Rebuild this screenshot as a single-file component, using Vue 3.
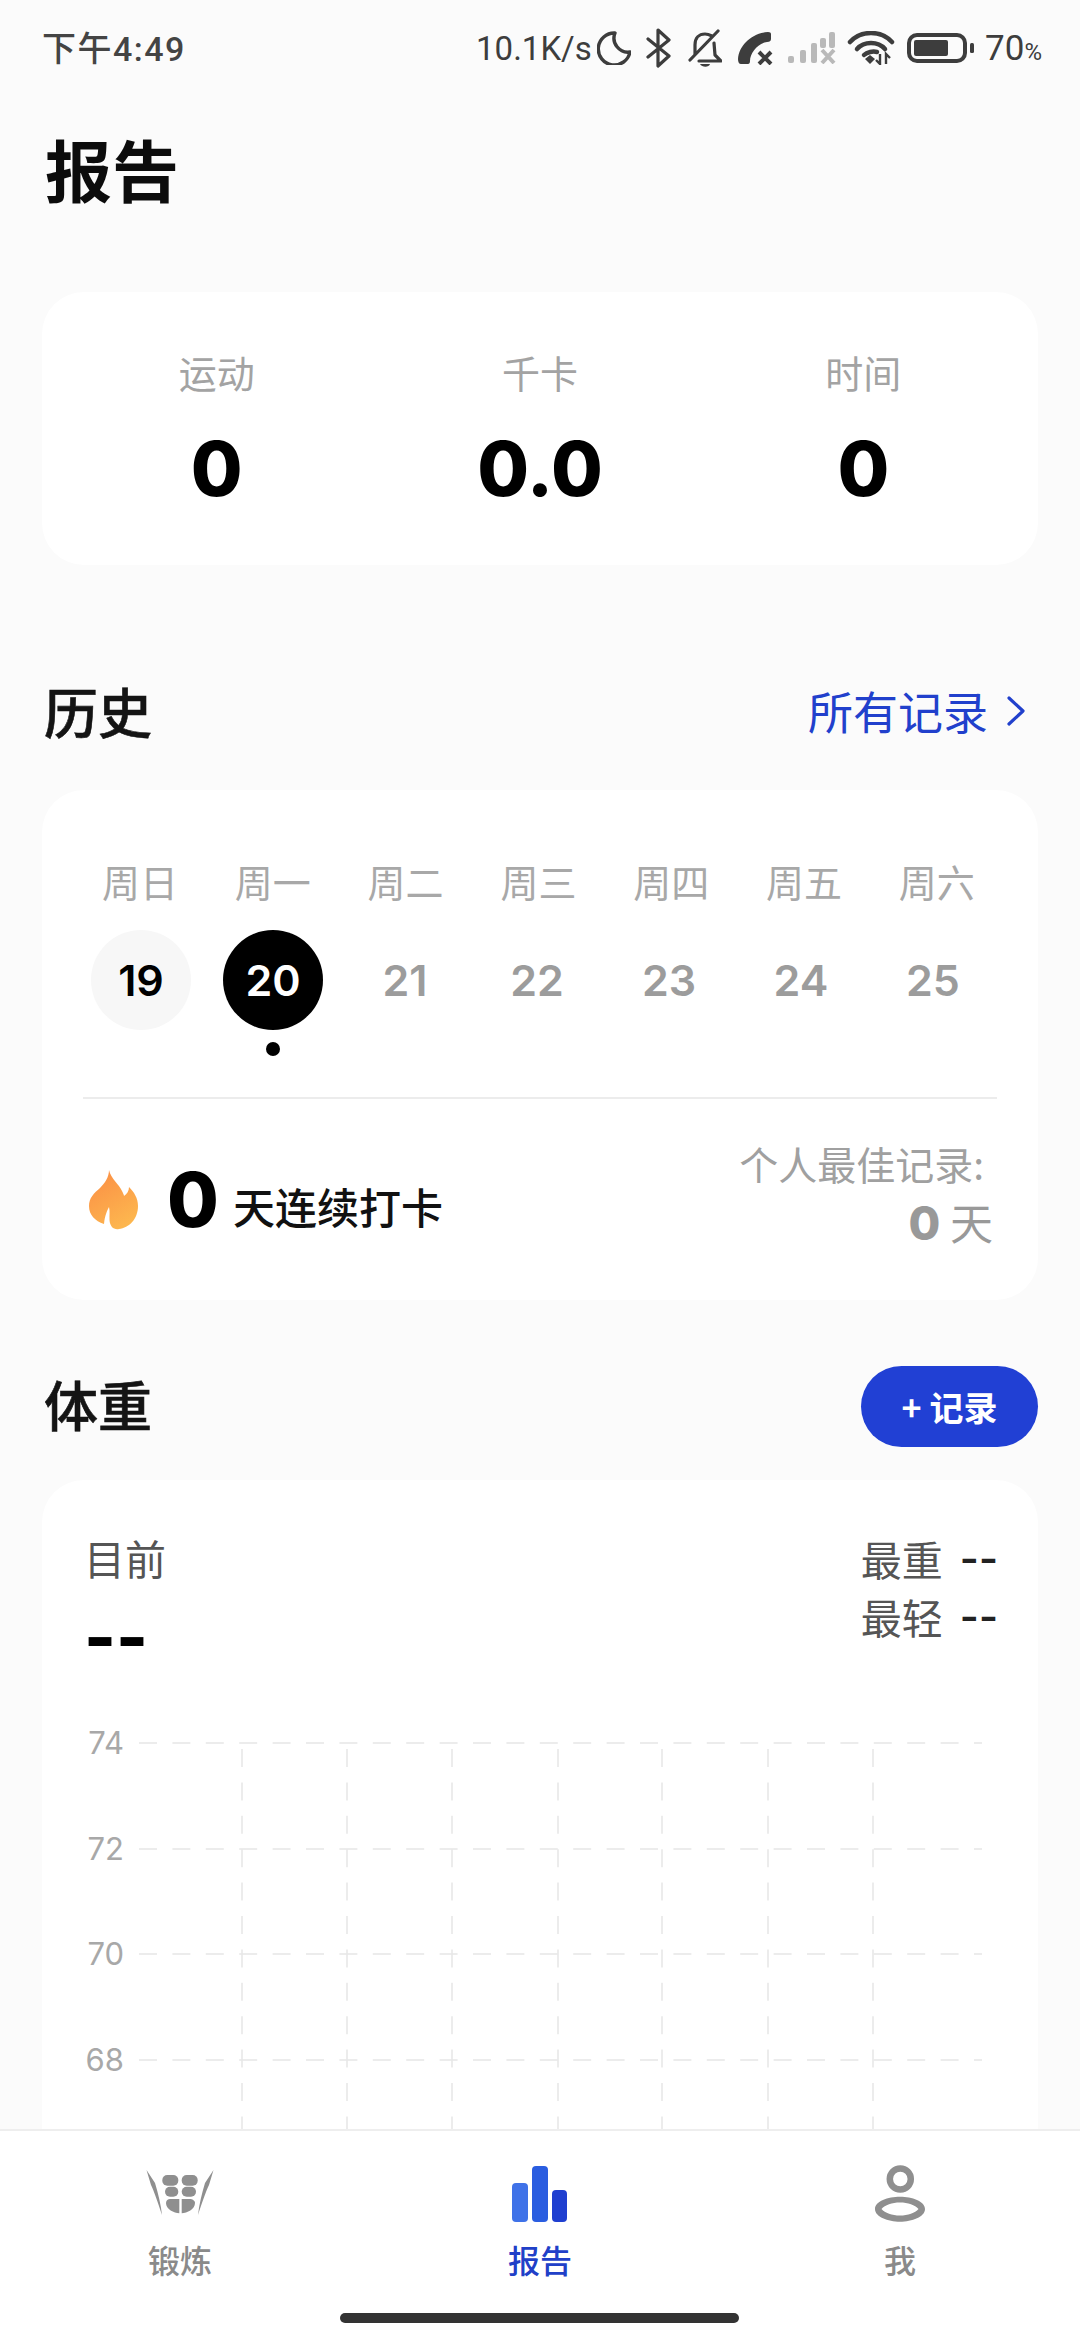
<script setup>
const stats = [
  { label: '运动', value: '0' },
  { label: '千卡', value: '0.0' },
  { label: '时间', value: '0' },
]
const days = [
  { w: '周日', d: 19, cls: 'today-soft' },
  { w: '周一', d: 20, cls: 'selected', dot: true },
  { w: '周二', d: 21 },
  { w: '周三', d: 22 },
  { w: '周四', d: 23 },
  { w: '周五', d: 24 },
  { w: '周六', d: 25 },
]
const ticks = [74, 72, 70, 68]
const hLines = [12, 118, 223, 329]
const vLines = [103, 208, 313, 419, 523, 629, 734]
</script>

<template>
  <div class="screen">
    <header class="status">
      <span class="time">下午4:49</span>
      <div class="status-right">
        <span class="speed">10.1K/s</span>
        <svg class="i-moon" width="34" height="34" viewBox="0 0 34 34"><path d="M18 2A16 16 0 1 0 33 21A14 14 0 0 1 18 2Z" fill="none" stroke="#3d3d3d" stroke-width="3.4" stroke-linejoin="round"/></svg>
        <svg class="i-bt" width="26" height="40" viewBox="0 0 26 40"><path d="M2 11 23 28 12 38V2L23 12 2 29" fill="none" stroke="#3d3d3d" stroke-width="3.2" stroke-linejoin="round" stroke-linecap="round"/></svg>
        <svg class="i-bell" width="34" height="40" viewBox="0 0 34 40"><path d="M7 26V17C7 10 11 6 17 6C19 6 22 7 24 8M26 15 27 27 33 33H11M30 3 2 32" fill="none" stroke="#3d3d3d" stroke-width="3.2" stroke-linejoin="round" stroke-linecap="round"/><path d="M12 36H22C21 39.500 14 39.500 12 36Z" fill="#3d3d3d"/></svg>
        <svg class="i-phone" width="36" height="34" viewBox="0 0 36 34"><path d="M30 1C14 2 1 14 0 28Q0 33 3 33H10Q12 33 12 30C12 22 20 12 29 11Q33 11 33 8V3Q33 1 30 1Z" fill="#3d3d3d"/><path d="M21 21 33 33M33 21 21 33" stroke="#3d3d3d" stroke-width="4"/></svg>
        <svg class="i-signal" width="48" height="32" viewBox="0 0 48 32"><g fill="#b9b9b9"><rect x="0" y="24" width="6" height="7" rx="2"/><rect x="12" y="18" width="6" height="13" rx="2"/><rect x="23" y="11" width="6" height="20" rx="2"/><rect x="32" y="6" width="6" height="10" rx="2"/><rect x="41" y="0" width="6" height="16" rx="2"/></g><path d="M34 18 46 31M46 18 34 31" stroke="#b9b9b9" stroke-width="4"/></svg>
        <svg class="i-wifi" width="48" height="34" viewBox="0 0 48 34"><g fill="none" stroke="#3d3d3d" stroke-width="4.500" stroke-linecap="round"><path d="M3 11C14 -1 34 -1 45 11"/><path d="M10 18C17 10 31 10 38 18"/><path d="M17 24C20 21 26 20 30 21"/></g><path d="M18 28 23 24 28 28 23 33Z" fill="#3d3d3d"/><path d="M33 23V33L29 29M39 33V23L43 27" fill="none" stroke="#3d3d3d" stroke-width="2.400"/></svg>
        <svg class="i-batt" width="67" height="30" viewBox="0 0 67 30"><rect x="2" y="2" width="56" height="26" rx="8" fill="none" stroke="#3d3d3d" stroke-width="4"/><rect x="7" y="7" width="34" height="16" rx="2" fill="#3d3d3d"/><rect x="63" y="10" width="4" height="10" rx="1.500" fill="#3d3d3d"/></svg>
        <span class="pct">70<small>%</small></span>
      </div>
    </header>

    <h1 class="title">报告</h1>

    <section class="card stats">
      <div v-for="s in stats" :key="s.label" class="stat">
        <span class="stat-label">{{ s.label }}</span>
        <span class="stat-value">{{ s.value }}</span>
      </div>
    </section>

    <div class="sec-head history-head">
      <h2>历史</h2>
      <a class="all">所有记录
        <svg width="20" height="32" viewBox="0 0 20 32"><path d="M3 3 17 16 3 29" fill="none" stroke="#2140cc" stroke-width="3.200" stroke-linecap="round" stroke-linejoin="round"/></svg>
      </a>
    </div>

    <section class="card history">
      <div class="week">
        <div class="wk-row">
          <span v-for="d in days" :key="d.w" class="wk">{{ d.w }}</span>
        </div>
        <div class="date-row">
          <div v-for="d in days" :key="d.d" class="day">
            <span class="date" :class="d.cls">{{ d.d }}</span>
            <i v-if="d.dot" class="dot"></i>
          </div>
        </div>
      </div>
      <div class="divider"></div>
      <div class="streak">
        <svg class="flame" width="50" height="61" viewBox="0 0 50 61">
          <defs><linearGradient id="fl" x1="0.2" y1="0" x2="0.7" y2="1"><stop offset="0" stop-color="#fb8f45"/><stop offset="1" stop-color="#fdb84f"/></linearGradient></defs>
          <path d="M20 1C22 10 30 15 33 22C34 24 35 26 35 27C38 25 40 22 40 18C45 23 49 29 49 37C49 50 40 59 30 60C25 61 21 58 20.500 51C20.300 46 21 42 20 38C18 42 16 46 15 55C6 52 0 46 0 37C0 29 5 24 11 19C16 14 20 8 20 1Z" fill="url(#fl)"/>
        </svg>
        <b class="streak-num">0</b>
        <span class="streak-txt">天连续打卡</span>
        <div class="best">
          <span class="best-label">个人最佳记录:</span>
          <span class="best-val"><b>0</b> 天</span>
        </div>
      </div>
    </section>

    <div class="sec-head weight-head">
      <h2>体重</h2>
      <button class="rec">+ 记录</button>
    </div>

    <section class="card weight">
      <div class="w-top">
        <div class="cur">
          <span class="cur-label">目前</span>
          <b class="cur-val">--</b>
        </div>
        <div class="mm">
          <div>最重<b>--</b></div>
          <div>最轻<b>--</b></div>
        </div>
      </div>
      <div class="chart">
        <div class="ticks">
          <span v-for="t in ticks" :key="t">{{ t }}</span>
        </div>
        <svg class="grid" width="860" height="420" viewBox="0 0 860 420">
          <g stroke="#e6e6e6" stroke-width="1.500" stroke-dasharray="18 15.400">
            <line v-for="y in hLines" :key="y" x1="0" :y1="y" x2="843" :y2="y" />
            <line v-for="x in vLines" :key="x" :x1="x" y1="18" :x2="x" y2="420" />
          </g>
        </svg>
      </div>
    </section>

    <nav class="tabs">
      <div class="tab">
        <svg width="100" height="75" viewBox="0 0 100 75">
          <g fill="#8f8f8f">
            <path d="M16.500 15 25 28C28 38 31 50 32 60C28 48 24 36 21 30Z"/>
            <path d="M83.500 15 75 28C72 38 69 50 68 60C72 48 76 36 79 30Z"/>
            <rect x="32.300" y="20" width="16" height="10.700" rx="5"/>
            <rect x="51.700" y="20" width="16" height="10.700" rx="5"/>
            <rect x="35" y="31.700" width="13.300" height="10" rx="5"/>
            <rect x="51.700" y="31.700" width="14.300" height="10" rx="5"/>
            <path d="M40 44H49.300V58.300C44 58.300 36 54 36 48C36 45.500 38 44 40 44Z"/>
            <path d="M60 44H51.700V58.300C57 58.300 65 54 65 48C65 45.500 62 44 60 44Z"/>
          </g>
        </svg>
        <span>锻炼</span>
      </div>
      <div class="tab active">
        <svg class="bars" width="56" height="56" viewBox="0 0 56 56">
          <rect x="0" y="17" width="16" height="39" rx="4" fill="#3f72e8"/>
          <rect x="20" y="0" width="16" height="56" rx="4" fill="#2a5de0"/>
          <rect x="40" y="24" width="15" height="32" rx="4" fill="#1f3fd0"/>
        </svg>
        <span>报告</span>
      </div>
      <div class="tab">
        <svg width="80" height="75" viewBox="0 0 80 75">
          <circle cx="40.300" cy="24" r="10.500" fill="none" stroke="#8f8f8f" stroke-width="6.500"/>
          <path fill-rule="evenodd" d="M15 54C15 46 28 41.700 40 41.700C52 41.700 65 46 65 54C65 62 52 66.700 40 66.700C28 66.700 15 62 15 54ZM21.500 54C25 50 32 47.500 40 47.500C48 47.500 55 50 58.500 54C55 58 48 60.500 40 60.500C32 60.500 25 58 21.500 54Z" fill="#8f8f8f"/>
        </svg>
        <span>我</span>
      </div>
      <i class="home"></i>
    </nav>
  </div>
</template>

<style>
html, body { margin: 0; padding: 0; background: #fbfbfb; }
</style>

<style scoped>
.screen {
  position: relative;
  width: 1080px;
  height: 2340px;
  overflow: hidden;
  background: #fbfbfb;
  font-family: "Noto Sans CJK SC", "Noto Sans", sans-serif;
  color: #111;
}
.status {
  height: 96px;
  box-sizing: border-box;
  padding: 0 38px 0 42px;
  display: flex;
  align-items: center;
  justify-content: space-between;
  color: #3d3d3d;
}
.time { font-size: 34px; letter-spacing: 1.5px; font-family: Roboto, "Noto Sans CJK SC", sans-serif; font-weight: 500; color: #444; margin-bottom: 3px; }
.status-right { display: flex; align-items: center; }
.speed { font-size: 33px; font-family: Roboto, sans-serif; width: 121px; white-space: nowrap; }
.i-bt { margin-left: 15px; }
.i-bell { margin-left: 16px; }
.i-phone { margin-left: 16px; }
.i-signal { margin-left: 14px; }
.i-wifi { margin-left: 11px; }
.i-batt { margin-left: 12px; }
.pct { margin-left: 11px; font-size: 35px; font-family: Roboto, sans-serif; }
.pct small { font-size: 24px; }

.title {
  margin: 26px 0 0 45px;
  font-size: 67px;
  line-height: 92px;
  font-weight: 700;
  color: #0c0c0c;
}
.card {
  margin: 0 42px;
  background: #fff;
  border-radius: 42px;
}
.stats {
  margin-top: 78px;
  height: 273px;
  padding: 0 13px;
  display: grid;
  grid-template-columns: repeat(3, 1fr);
}
.stat { display: flex; flex-direction: column; align-items: center; }
.stat-label { margin-top: 52px; font-size: 38px; line-height: 56px; color: #a3a3a3; }
.stat-value {
  margin-top: 23px;
  font-family: Inter, sans-serif;
  font-weight: 800;
  font-size: 75px;
  line-height: 92px;
  color: #000;
}
.sec-head {
  margin: 0 42px;
  display: flex;
  align-items: center;
  justify-content: space-between;
}
.sec-head h2 {
  margin: 0 0 6px 2px;
  font-size: 54px;
  font-weight: 500;
  -webkit-text-stroke: 0.6px #141414;
  color: #141414;
}
.history-head { margin-top: 106px; height: 84px; }
.all {
  display: flex;
  align-items: center;
  gap: 18px;
  font-size: 45px;
  color: #2140cc;
  padding-right: 12px;
  margin-bottom: 5px;
}
.history { margin-top: 35px; height: 510px; }
.week { height: 307px; }
.wk-row {
  padding-top: 64px;
  padding-left: 31.6px;
  display: grid;
  grid-template-columns: repeat(7, 132.8px);
}
.wk { font-size: 38px; line-height: 54px; color: #a8a8a8; white-space: nowrap; text-align: center; }
.date-row {
  margin-top: 22px;
  padding-left: 33px;
  display: grid;
  grid-template-columns: repeat(7, 132px);
}
.day { display: flex; flex-direction: column; align-items: center; }
.date {
  width: 100px;
  height: 100px;
  border-radius: 50%;
  display: flex;
  align-items: center;
  justify-content: center;
  font-family: Inter, sans-serif;
  font-size: 43px;
  font-weight: 600;
  color: #9c9c9c;
}
.today-soft { background: #f7f7f7; color: #000; }
.selected { background: #000; color: #fff; }
.dot { margin-top: 12px; width: 14px; height: 14px; border-radius: 50%; background: #000; }
.divider { height: 1.5px; background: #ececec; margin: 0 41px; }
.streak { height: 200px; display: flex; align-items: flex-start; padding: 0 45px 0 47px; }
.flame { margin-top: 70px; flex: none; }
.streak-num {
  margin: 55px 0 0 28px;
  font-family: Inter, sans-serif;
  font-weight: 800;
  font-size: 75px;
  line-height: 92px;
  color: #000;
}
.streak-txt { margin: 77px 0 0 14px; font-size: 42px; line-height: 60px; font-weight: 500; color: #111; }
.best { margin-left: auto; display: flex; flex-direction: column; align-items: flex-end; }
.best-label { margin-top: 37px; font-size: 39px; line-height: 54px; color: #a0a0a0; padding-right: 9px; }
.best-val { margin-top: 3px; font-size: 43px; line-height: 56px; color: #999; }
.best-val b { font-family: Inter, sans-serif; font-weight: 800; font-size: 46px; }

.weight-head { margin-top: 66px; height: 81px; }
.rec {
  width: 177px;
  height: 81px;
  border: 0;
  border-radius: 41px;
  background: #2140d4;
  color: #fff;
  font-family: inherit;
  font-size: 34px;
  font-weight: 700;
  padding: 0;
}
.weight { margin-top: 33px; height: 900px; box-sizing: border-box; padding: 0 40px 0 42px; }
.w-top { display: flex; justify-content: space-between; height: 263px; }
.cur { display: flex; flex-direction: column; }
.cur-label { margin-top: 47px; font-size: 41px; line-height: 60px; color: #555; }
.cur-val {
  margin-top: 16px;
  font-family: Inter, sans-serif;
  font-size: 68px;
  line-height: 68px;
  font-weight: 800;
  color: #000;
}
.mm { margin-top: 49px; font-size: 41px; line-height: 58px; color: #555; }
.mm div { display: flex; justify-content: flex-end; }
.mm b { margin-left: 17px; font-family: Inter, sans-serif; font-weight: 600; color: #222; }
.chart { display: flex; margin-left: -42px; }
.ticks { width: 82px; display: flex; flex-direction: column; align-items: flex-end; margin-top: -22px; flex: none; }
.ticks span { height: 105.7px; flex: none; font-family: Inter, sans-serif; font-size: 31px; line-height: 44px; color: #a8a8a8; }
.grid { flex: none; margin-top: -12px; margin-left: 15px; }

.tabs {
  position: absolute;
  left: 0;
  right: 0;
  bottom: 0;
  height: 211px;
  box-sizing: border-box;
  background: #fff;
  border-top: 2px solid #eeeeee;
  display: grid;
  grid-template-columns: repeat(3, 1fr);
}
.tab {
  position: relative;
  display: flex;
  flex-direction: column;
  align-items: center;
  justify-content: flex-end;
  height: 152px;
  font-size: 32px;
  font-weight: 500;
  line-height: 48px;
  color: #8a8a8a;
}
.tab svg { position: absolute; top: 24px; left: 50%; transform: translateX(-50%); }
.tab svg.bars { top: 35px; }
.tab.active { color: #2140c8; }
.home {
  position: absolute;
  left: 340px;
  top: 182px;
  width: 399px;
  height: 10px;
  border-radius: 5px;
  background: #333;
}
</style>
